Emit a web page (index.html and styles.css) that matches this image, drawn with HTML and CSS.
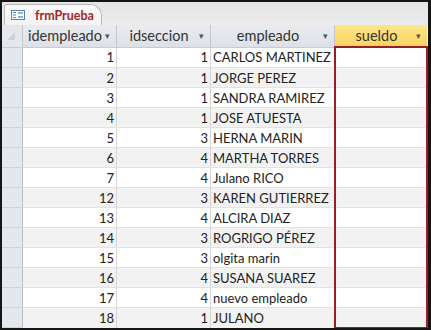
FILE: index.html
```html
<!DOCTYPE html>
<html lang="es">
<head>
    <meta charset="UTF-8">
    <title>frmPrueba</title>
    <link rel="stylesheet" href="styles.css">
</head>
<body>

    <div class="frame">
        <!-- tab strip -->
        <div class="tabbar">
            <div class="tab">
                <svg class="tab-icon" width="14" height="10" viewBox="0 0 14 10">
                    <rect x="0.5" y="0.5" width="13" height="9" fill="#fff" stroke="#5b7fb5"/>
                    <rect x="2" y="2" width="3" height="1" fill="#5b7fb5"/>
                    <rect x="2" y="4.5" width="3" height="1" fill="#5b7fb5"/>
                    <rect x="2" y="7" width="3" height="1" fill="#5b7fb5"/>
                    <rect x="7" y="2" width="5" height="2" fill="#8fb0dc"/>
                    <rect x="7" y="6" width="5" height="2" fill="#8fb0dc"/>
                </svg>
                <span class="tab-title">frmPrueba</span>
            </div>
        </div>

        <table class="grid">
            <thead>
                <tr>
                    <th class="sel"><span class="corner"></span></th>
                    <th class="c-id"><span class="hd"><span class="hd-text clip">idempleado</span><span class="arrow">&#9662;</span></span></th>
                    <th class="c-sec"><span class="hd"><span class="hd-text">idseccion</span><span class="arrow">&#9662;</span></span></th>
                    <th class="c-emp"><span class="hd"><span class="hd-text">empleado</span><span class="arrow">&#9662;</span></span></th>
                    <th class="c-sue active"><span class="hd"><span class="hd-text">sueldo</span><span class="arrow">&#9662;</span></span></th>
                </tr>
            </thead>
            <tbody id="rows"></tbody>
        </table>
    </div>

    <script>
        // datos del formulario
        const empleados = [
            [1, 1, "CARLOS MARTINEZ"],
            [2, 1, "JORGE PEREZ"],
            [3, 1, "SANDRA RAMIREZ"],
            [4, 1, "JOSE ATUESTA"],
            [5, 3, "HERNA MARIN"],
            [6, 4, "MARTHA TORRES"],
            [7, 4, "Julano RICO"],
            [12, 3, "KAREN GUTIERREZ"],
            [13, 4, "ALCIRA DIAZ"],
            [14, 3, "ROGRIGO PÉREZ"],
            [15, 3, "olgita marin"],
            [16, 4, "SUSANA SUAREZ"],
            [17, 4, "nuevo empleado"],
            [18, 1, "JULANO"]
        ];

        const tbody = document.getElementById("rows");
        empleados.forEach(function(e, i) {
            const tr = document.createElement("tr");
            if (i === 0) tr.className = "first";
            if (i === empleados.length - 1) tr.className = "last";
            tr.innerHTML =
                '<td class="sel"></td>' +
                '<td class="num">' + e[0] + '</td>' +
                '<td class="num">' + e[1] + '</td>' +
                '<td class="txt">' + e[2] + '</td>' +
                '<td class="sue"></td>';
            tbody.appendChild(tr);
        });
    </script>

</body>
</html>
```

FILE: styles.css
```css
body {
    margin: 0;
    background: #fff;
    font-family: Lato, "Liberation Sans", sans-serif;
}

.frame {
    width: 431px;
    height: 330px;
    box-sizing: border-box;
    border: 2px solid #141414;
    border-right-width: 3px;
    background: #f4f4f4;
    overflow: hidden;
}

.tabbar {
    height: 23px;
    background: linear-gradient(#e4e4e4, #ececec);
    display: flex;
    align-items: flex-end;
    padding-left: 2px;
}

.tab {
    height: 20px;
    width: 80px;
    padding-left: 6px;
    padding-right: 10px;
    display: flex;
    align-items: center;
    gap: 10px;
    background: linear-gradient(#fafafa, #f3f3f3);
    border: 1px solid #b9b9b9;
    border-bottom: none;
    border-radius: 3px 12px 0 0;
}

.tab-icon {
    flex: none;
}

.tab-title {
    color: #a1262e;
    font-weight: bold;
    font-size: 12.5px;
}

.grid {
    border-collapse: collapse;
    table-layout: fixed;
    width: 426px;
    font-size: 13px;
    color: #222;
}

.grid th {
    height: 21px;
    padding: 0;
    background: linear-gradient(#e9ebef, #dde1e7);
    border-right: 1px solid #c3c7cd;
    border-bottom: 1px solid #c8ccd2;
    font-weight: normal;
    font-size: 14.5px;
    color: #333;
}

.grid th.active {
    background: linear-gradient(#fde58c, #f9d45f);
    border-right: none;
}

.hd {
    display: flex;
    align-items: center;
    padding: 0 4px 0 5px;
}

.hd-text {
    flex: 1;
    text-align: center;
    white-space: nowrap;
    overflow: hidden;
}

.hd-text.clip {
    text-align: left;
}

.arrow {
    flex: none;
    font-size: 9px;
    color: #555;
    width: 10px;
    text-align: center;
}

.grid th.sel {
    width: 20px;
    background: #e4e7ec;
    position: relative;
}

.corner {
    position: absolute;
    left: 5px;
    top: 7px;
    width: 0;
    height: 0;
    border-left: 8px solid transparent;
    border-bottom: 8px solid #cfd3d9;
}

.c-id { width: 93px; }
.c-sec { width: 93px; }
.c-emp { width: 123px; }

.grid td {
    height: 19px;
    padding: 0 2px;
    border-right: 1px solid #d6d6d6;
    border-bottom: 1px solid #dfe2e6;
    white-space: nowrap;
    overflow: hidden;
}

.grid tbody tr:nth-child(odd) td {
    background: #fff;
}

.grid tbody tr:nth-child(even) td {
    background: #f2f2f2;
}

.grid td.sel {
    background: #e4e7ec !important;
    border-right: 1px solid #b9bec6;
    border-bottom: 1px solid #cfd3d9;
}

.grid tr.last td.sel {
    border-bottom: 2px solid #e6d98d;
}

.grid td.num {
    text-align: right;
}

.grid td.txt {
    text-align: left;
}

.grid td.sue {
    border-left: 2px solid #9c1d25;
    border-right: 2px solid #9c1d25;
}

.grid tr.first td.sue {
    border-top: 2px solid #9c1d25;
}

.grid tr.last td.sue {
    border-bottom: 2px solid #9c1d25;
}
```
